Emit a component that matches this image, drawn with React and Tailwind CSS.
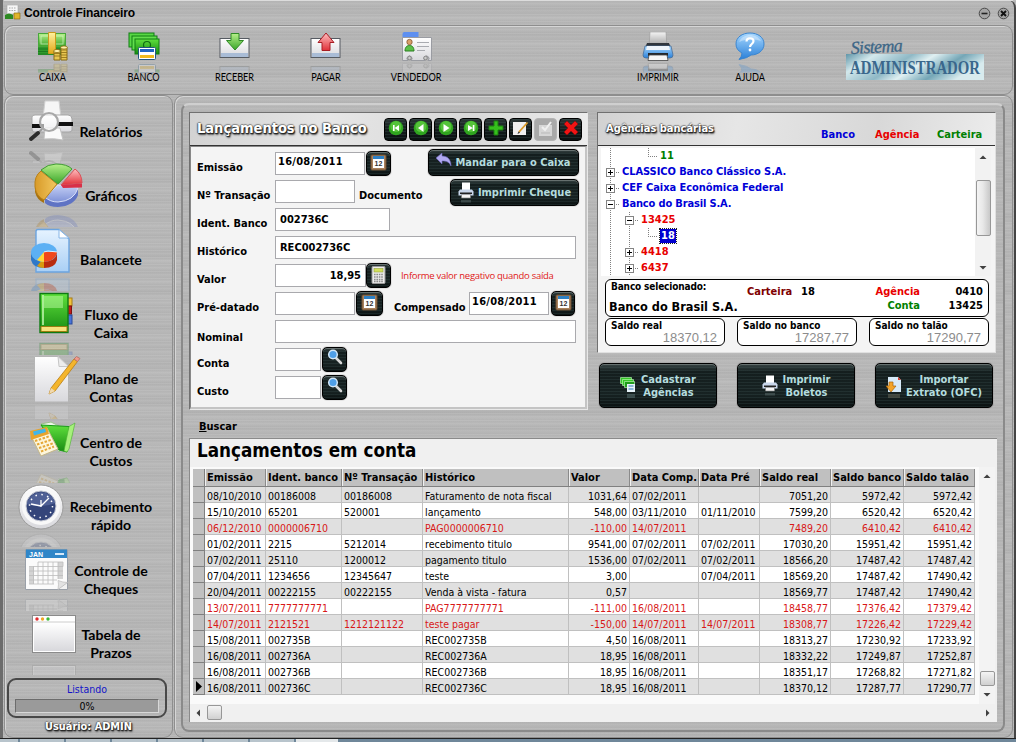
import React from "react";

const COLS = [
  ["Emissão", "w-[61px]", ""],
  ["Ident. banco", "w-[76px]", ""],
  ["Nº Transação", "w-[81px]", ""],
  ["Histórico", "w-[146px]", ""],
  ["Valor", "w-[61px]", "text-right"],
  ["Data Comp.", "w-[69px]", ""],
  ["Data Pré", "w-[61px]", ""],
  ["Saldo real", "w-[71px]", "text-right"],
  ["Saldo banco", "w-[73px]", "text-right"],
  ["Saldo talão", "w-[71px]", "text-right"],
];

const ROWS = [
  ["08/10/2010", "00186008", "00186008", "Faturamento de nota fiscal", "1031,64", "07/02/2011", "", "7051,20", "5972,42", "5972,42"],
  ["15/10/2010", "65201", "520001", "lançamento", "548,00", "03/11/2010", "01/11/2010", "7599,20", "6520,42", "6520,42"],
  ["06/12/2010", "0000006710", "", "PAG0000006710", "-110,00", "14/07/2011", "", "7489,20", "6410,42", "6410,42"],
  ["01/02/2011", "2215", "5212014", "recebimento titulo", "9541,00", "07/02/2011", "07/02/2011", "17030,20", "15951,42", "15951,42"],
  ["07/02/2011", "25110", "1200012", "pagamento titulo", "1536,00", "07/02/2011", "07/02/2011", "18566,20", "17487,42", "17487,42"],
  ["07/04/2011", "1234656", "12345647", "teste", "3,00", "", "07/04/2011", "18569,20", "17487,42", "17490,42"],
  ["20/04/2011", "00222155", "00222155", "Venda à vista - fatura", "0,57", "", "", "18569,77", "17487,42", "17490,42"],
  ["13/07/2011", "7777777771", "", "PAG7777777771", "-111,00", "16/08/2011", "", "18458,77", "17376,42", "17379,42"],
  ["14/07/2011", "2121521", "1212121122", "teste pagar", "-150,00", "14/07/2011", "14/07/2011", "18308,77", "17226,42", "17229,42"],
  ["15/08/2011", "002735B", "", "REC002735B", "4,50", "16/08/2011", "", "18313,27", "17230,92", "17233,92"],
  ["16/08/2011", "002736A", "", "REC002736A", "18,95", "16/08/2011", "", "18332,22", "17249,87", "17252,87"],
  ["16/08/2011", "002736B", "", "REC002736B", "18,95", "16/08/2011", "", "18351,17", "17268,82", "17271,82"],
  ["16/08/2011", "002736C", "", "REC002736C", "18,95", "16/08/2011", "", "18370,12", "17287,77", "17290,77"],
];

function Defs() {
  const g = (id, a, b, h) => (
    <linearGradient id={id} x1="0" y1="0" x2={h ? "1" : "0"} y2={h ? "0" : "1"}>
      <stop offset="0" stopColor={a} />
      <stop offset="1" stopColor={b} />
    </linearGradient>
  );
  return (
    <svg className="absolute h-0 w-0">
      <defs>
        {g("gGreen", "#b6f08a", "#3aa52a")}
        {g("gGreenD", "#5fe03c", "#178a12")}
        {g("gRed", "#ffc0c0", "#e03038")}
        {g("gGold", "#fff2a0", "#e0a818")}
        {g("gBlue", "#a8d8ff", "#2a80d8")}
        {g("gWhite", "#ffffff", "#d8d8dc")}
        {g("gGray", "#f4f4f4", "#9a9a9a")}
        {g("gDoc", "#e6f3ff", "#a9cff5")}
        {g("gPie", "#c5d0f5", "#7f92d8")}
        {g("gAmber", "#d89a28", "#f2c860", true)}
      </defs>
    </svg>
  );
}

/* ---------- toolbar glyphs (32 x 30) ---------- */
const IconCash = () => (
  <g>
    <rect x="1" y="1" width="28" height="22" fill="#2f9a2c" />
    <rect x="1.500" y="1.500" width="27" height="13" fill="url(#gGreen)" stroke="#48a83c" />
    <rect x="4" y="4" width="22" height="8" fill="none" stroke="#eaffdc" strokeOpacity=".6" />
    <path d="M1 17h28M1 19.500h28M1 22h28" stroke="#1c7a20" />
    <path d="M11.500.500h7v21h-7z" fill="url(#gGold)" stroke="#c99a1c" />
    <path d="M17 19h6v9h-6zM24 15h6v13h-6z" fill="#e8c650" stroke="#8a6c14" />
    <path d="M17 21.500h6M17 24h6M24 18h6M24 20.500h6M24 23h6M24 25.500h6" stroke="#8a6c14" strokeWidth=".8" />
    <ellipse cx="20" cy="19" rx="3.300" ry="1.600" fill="#fff0a8" stroke="#8a6c14" strokeWidth=".8" />
    <ellipse cx="27" cy="15.500" rx="3.300" ry="1.600" fill="#fff0a8" stroke="#8a6c14" strokeWidth=".8" />
  </g>
);
const IconBank = () => (
  <g>
    <rect x="1" y="1" width="25" height="14" fill="#58d845" stroke="#0f7d12" />
    <rect x="4" y="4" width="25" height="14" fill="#62de4c" stroke="#0f7d12" />
    <rect x="7" y="7" width="24" height="15" fill="url(#gGreenD)" stroke="#0f7d12" />
    <circle cx="19" cy="13" r="3.500" fill="none" stroke="#0e6b12" strokeWidth="1.200" />
    <rect x="10.500" y="15.500" width="17" height="12" rx="1" fill="#fff" stroke="#24577e" />
    <rect x="12" y="17" width="14" height="3" fill="#1e63c0" />
    <rect x="12" y="23" width="14" height="3" fill="#f0b91c" />
  </g>
);
const Tray = () => (
  <g>
    <rect x="1" y="6.500" width="29" height="19" fill="url(#gWhite)" stroke="#565b62" />
    <rect x="2" y="21" width="27" height="4" fill="#a9bcd6" />
  </g>
);
const IconIn = () => (
  <g>
    <Tray />
    <path d="M12 1.500h8v7h4.500L16 18 7.500 8.500H12z" fill="url(#gGreen)" stroke="#2f8a26" />
  </g>
);
const IconOut = () => (
  <g>
    <Tray />
    <path d="M12 18.500h8v-8h4L16 1 8 10.500h4z" fill="url(#gRed)" stroke="#a81c24" />
  </g>
);
const IconCard = () => (
  <g>
    <path d="M1.500 2a2 2 0 0 1 2-2h14v6h-16z" fill="#5d8ff0" />
    <path d="M1.500 5.500h29v23h-3.500a2.500 2.500 0 1 0-3 0h-14a2.500 2.500 0 1 0-3 0h-5.500z" fill="url(#gWhite)" stroke="#9a9ca2" />
    <circle cx="8.500" cy="10" r="2.700" fill="#d9a06a" stroke="#7a4a24" strokeWidth=".7" />
    <path d="M4 19c0-4 2-5.500 4.500-5.500S13 15 13 19z" fill="#5cc048" stroke="#2b7f20" />
    <path d="M16 10.500h12M16 14.500h12M16 18.500h8" stroke="#a9abb0" strokeWidth="1.200" />
    <circle cx="8.500" cy="26" r="1.800" fill="#ccc" stroke="#888" />
    <circle cx="24.500" cy="26" r="1.800" fill="#ccc" stroke="#888" />
  </g>
);
const IconPrinter = () => (
  <g>
    <path d="M8 0h16l1 15H7z" fill="url(#gGray)" stroke="#999" strokeWidth=".6" />
    <path d="M5 11h22l2 5H3z" fill="#30353c" />
    <path d="M3 14h26l2 9q0 3-3 3H4q-3 0-3-3z" fill="url(#gBlue)" stroke="#4a6d96" strokeWidth=".8" />
    <path d="M5 14h22l1 4H4z" fill="#eef4fa" />
    <path d="M6 21h20v3H6z" fill="#23272c" />
    <path d="M7 23h18l1 5.500H6z" fill="#f6f6f6" stroke="#444" strokeWidth=".8" />
  </g>
);
const IconHelp = () => (
  <g>
    <path d="M16 1c8 0 14 4.500 14 11s-6 11-13 11q-3 3-12 4.500 3-3 3-6.500Q2 18 2 12C2 5.500 8 1 16 1z" fill="url(#gBlue)" stroke="#3b86d0" />
    <path d="M5 10c2-5 7-7 11-7s9 2 11 6c-7-2-14-2-22 1z" fill="#fff" fillOpacity=".35" />
    <path d="M12.500 9.500c0-4.500 7-4 7-.5 0 3-3.500 3-3.500 6" fill="none" stroke="#fff" strokeWidth="2.200" />
    <circle cx="16" cy="18" r="1.400" fill="#fff" />
  </g>
);

function ToolButton({ id, label, w, children }) {
  return (
    <div className={`flex flex-col items-center pt-[6px] ${w}`}>
      <svg className="-mb-[2px] h-[42px] w-8 shrink-0" viewBox="0 0 32 42">
        <clipPath id={`clip-${id}`}>
          <rect x="0" y="31.500" width="32" height="9" />
        </clipPath>
        <g id={`ic-${id}`}>{children}</g>
        <g clipPath={`url(#clip-${id})`} opacity=".25">
          <use href={`#ic-${id}`} transform="translate(0 60) scale(1 -1)" />
        </g>
      </svg>
      <span className="relative scale-x-[0.87] font-['Lato',sans-serif] text-[10.5px] leading-[10px] text-black">{label}</span>
    </div>
  );
}

/* ---------- sidebar glyphs (70 x 64, x origin 14) ---------- */
const SReport = () => (
  <g>
    <path d="M31 1h14l2 17H29z" fill="#f6f6f6" stroke="#d0d0d0" />
    <path d="M18 17q0-2 3-2h33q4 0 4 4v11q0 2-3 2H20q-2 0-2-3z" fill="url(#gWhite)" stroke="#a6a6a6" />
    <path d="M18 24h12v4H18zM44 22h15v4H44z" fill="#111" />
    <path d="M31 28h15l3 12q-9-2-19-1z" fill="#fafafa" stroke="#c2c2c2" />
    <circle cx="35" cy="22" r="9" fill="#fff" fillOpacity=".6" stroke="#a8a8a8" strokeWidth="2.200" />
    <path d="M28 29l-4 4" stroke="#999" strokeWidth="2" />
    <path d="M24 33l-7 6" stroke="#2c2c2c" strokeWidth="4" strokeLinecap="round" />
  </g>
);
const SPie = () => (
  <g>
    <path d="M31 35v4q4 4 13 4 16-1 20-12v-6z" fill="#5f73c4" />
    <path d="M44 21L31 33Q36 38 44 38 60 37 64 24z" fill="url(#gPie)" stroke="#d8dff8" />
    <path d="M21 21v7q2 8 9 11v-4z" fill="#a8720e" />
    <path d="M43 20L27 7Q20 12 21 23q1 9 9 13z" fill="url(#gAmber)" stroke="#b88018" />
    <path d="M44 20L27 6Q34 0 42 0q11 0 16 5z" fill="url(#gGreen)" stroke="#3f9c33" />
    <path d="M47 21L61 5q7 5 7 14z" fill="url(#gRed)" stroke="#d85058" />
    <path d="M47 21l21-1.500v4l-19 .5z" fill="#d83048" />
  </g>
);
const SBalance = () => (
  <g>
    <path d="M24 1.500q-2 0-2 2V44h33V11L45 1.500z" fill="url(#gDoc)" stroke="#6ba4e0" strokeWidth="1.400" />
    <path d="M45 1.500V10h10z" fill="#fff" stroke="#86b5e6" />
    <path d="M17 25v7q2 8 13 8V30z" fill="#2f78c8" />
    <path d="M30 30l-7 8q3 2 7 2z" fill="#d89a10" />
    <path d="M30 30l13-5v7q-2 8-13 8z" fill="#b82c10" />
    <ellipse cx="30" cy="24.500" rx="13" ry="9.500" fill="#5cb0f4" />
    <path d="M30 24l-7 8q3 2 7 2z" fill="#ffd83a" />
    <path d="M30 24h13q-1 9-13 10z" fill="#f0481c" />
    <path d="M30 24l4-1 9 1" stroke="#fff" strokeWidth=".8" fill="none" />
  </g>
);
const SBook = () => (
  <g>
    <rect x="53" y="6" width="5" height="8" fill="#f0c23c" stroke="#a87c10" />
    <rect x="53" y="14" width="4.500" height="8" fill="#c41a1a" stroke="#7c1010" />
    <rect x="53" y="23" width="5" height="9" fill="#4a74d8" stroke="#26489a" />
    <rect x="26" y="1.500" width="28" height="39" fill="url(#gGreenD)" stroke="#0d7a12" strokeWidth="1.400" />
    <rect x="30" y="4" width="19" height="12" fill="#c8ffb0" fillOpacity=".45" />
    <path d="M29 3v30" stroke="#c8f8b4" strokeWidth="1.500" />
    <rect x="27" y="34.500" width="26" height="5" fill="#f8e27c" stroke="#9a7d10" />
  </g>
);
const SPaper = () => (
  <g>
    <path d="M20.500.500h24l10 9V46h-34z" fill="url(#gWhite)" stroke="#b5b5b5" />
    <path d="M44 .500l1 10h9.500z" fill="#ececec" stroke="#c6c6c6" />
    <path d="M35 38l2-6L60 3l3.500 2.500L41 35z" fill="#f4b52c" stroke="#b97d12" strokeWidth=".8" />
    <path d="M35 38l2-6 4 3z" fill="#f0d9b0" />
    <path d="M60 3l2.500-2.500 3.500 2L63.500 5.500z" fill="#f09a8c" stroke="#b56c60" strokeWidth=".8" />
  </g>
);
const SCost = () => (
  <g>
    <path d="M27 4l10-2 20 10 2 3-14 17z" fill="#eef5e8" stroke="#9bbf8a" />
    <path d="M27 5l28 1.500L53 32l-8-2z" fill="url(#gGreenD)" stroke="#189818" />
    <path d="M55 6.500l6-3.500-6 26-2 3-3-1z" fill="#a6f07c" stroke="#4cb030" strokeWidth=".6" />
    <path d="M16 14l17-6 11 21-17 7z" fill="#fdf6dc" stroke="#c4b688" />
    <path d="M16 11l17-4 2 7-18 6z" fill="#e9a42c" />
    <path d="M19 11.500l12-3 1 3.500-12 3.500z" fill="#42b6e8" />
    <path d="M21 21l15-5M23 24.500l15-5M25 28l15-5M27 31.500l13-5" stroke="#e5a838" strokeWidth="2" strokeDasharray="2.500 1.500" />
  </g>
);
const SClock = () => (
  <g>
    <circle cx="27" cy="23" r="22" fill="url(#gWhite)" stroke="#9b9b9b" />
    <circle cx="27" cy="22" r="19" fill="#f8f8f8" />
    <circle cx="27" cy="22" r="15" fill="#34457a" stroke="#c3c7d2" />
    <path d="M12.500 20a15 15 0 0 1 29-1q-14 6-29 1z" fill="#6a7cb0" fillOpacity=".5" />
    <circle cx="27" cy="22" r="11.500" fill="none" stroke="#fff" strokeWidth="1.500" strokeDasharray="1.500 4.520" />
    <path d="M27 22l-10-2M27 23v-7M27 22l8-8" stroke="#fff" strokeWidth="1.300" />
  </g>
);
const SCalendar = () => (
  <g>
    <path d="M11.500 1.500h42v33l-9 7h-33z" fill="#fbfbfb" stroke="#9aa0a8" />
    <path d="M44 41.500h9.500v-7" fill="#f2f2f2" stroke="#9aa0a8" />
    <rect x="12" y="1.500" width="41" height="8.500" fill="#2f86c8" />
    <text x="15" y="8.500" fontSize="7" fontWeight="700" fontFamily="Liberation Sans, sans-serif" fill="#fff">JAN</text>
    <path d="M41 6h9" stroke="#d5e9fa" strokeWidth="2" />
    <rect x="15" y="19" width="5" height="17" fill="#d4d4d4" />
    <rect x="44" y="14" width="5" height="17" fill="#d4d4d4" />
    <path d="M24 14h25v4.500H15M15 23h34M15 27.500h34M15 32h28M15 36h25M19.500 18v18M24 14v22M29 14v22M34 14v22M39 14v22M44 14v17" fill="none" stroke="#bcbcbc" strokeWidth=".8" />
    <path d="M44 41.500q1-6 0-9 5 2 9.500 2z" fill="#e2e2e2" stroke="#bbb" strokeWidth=".7" />
  </g>
);
const SWindow = () => (
  <g>
    <rect x="18.500" y="3.500" width="43" height="37" fill="#fff" stroke="#8b8b8b" />
    <rect x="20" y="11" width="40" height="28" fill="url(#gWhite)" />
    <path d="M19 10h42" stroke="#ccc" />
    <circle cx="23" cy="7" r="1.700" fill="#e0282c" />
    <circle cx="28.500" cy="7" r="1.700" fill="#f0a828" />
    <circle cx="34" cy="7" r="1.700" fill="#3bb838" />
  </g>
);

const MENU = [
  [["Relatórios"], SReport, 92],
  [["Gráficos"], SPie, 94],
  [["Balancete"], SBalance, 95],
  [["Fluxo de", "Caixa"], SBook, 92],
  [["Plano de", "Contas"], SPaper, 95],
  [["Centro de", "Custos"], SCost, 90],
  [["Recebimento", "rápido"], SClock, 95],
  [["Controle de", "Cheques"], SCalendar, 93],
  [["Tabela de", "Prazos"], SWindow, 94],
];

function MenuItem({ lines, Glyph, mirror, n }) {
  return (
    <div className="flex h-16 items-center">
      <svg className="h-16 w-[70px] shrink-0 overflow-visible" viewBox="0 0 70 64">
        <clipPath id={`mclip${n}`}>
          <rect x="0" y="49" width="70" height="14" />
        </clipPath>
        <g id={`menu${n}`}>
          <Glyph />
        </g>
        <g clipPath={`url(#mclip${n})`} opacity=".25">
          <use href={`#menu${n}`} transform={`translate(0 ${mirror}) scale(1 -1)`} />
        </g>
      </svg>
      <div className="relative -ml-[21px] w-24 text-center font-['Lato',sans-serif] text-[14.1px] leading-[18px] font-bold text-black">
        {lines.map((l) => (
          <div key={l}>{l}</div>
        ))}
      </div>
    </div>
  );
}

/* ---------- dark glossy buttons ---------- */
function Dark({ className = "", children }) {
  return (
    <div
      className={`flex shrink-0 items-center justify-center rounded-[5px] border border-black bg-[repeating-linear-gradient(180deg,rgba(90,120,120,0.16)_0px,rgba(90,120,120,0.16)_1px,transparent_1px,transparent_3px),linear-gradient(180deg,#3a4747_0%,#141e1e_18%,#172222_70%,#0b1212_100%)] font-bold text-[#b4dcde] shadow-[inset_0_1px_0_#66706f,0_0_1px_#333] ${className}`}
    >
      {children}
    </div>
  );
}
const MiniCal = () => (
  <svg className="-mt-[3px] h-[17px] w-[17px]" viewBox="0 0 17 17">
    <rect x="1" y="1" width="15" height="15" rx="1" fill="#a9825c" stroke="#6a4c30" />
    <rect x="3" y="2.500" width="11" height="11.500" fill="#fff" />
    <rect x="3" y="2" width="11" height="3" fill="#2e80c4" />
    <text x="4.500" y="12" fontSize="7" fontFamily="Liberation Sans, sans-serif" fill="#333">12</text>
  </svg>
);
const MiniCalc = () => (
  <svg className="-mt-[2px] h-[18px] w-[15px]" viewBox="0 0 15 18">
    <rect x="1" y=".5" width="13" height="17" rx="1" fill="#ececec" stroke="#999" />
    <rect x="3" y="2.500" width="9" height="3.500" fill="#d2e05c" stroke="#95a040" strokeWidth=".6" />
    <path d="M3 8.500h9M3 11h9M3 13.500h9M3 15.500h9" stroke="#8a8a8a" strokeWidth="1.400" strokeDasharray="1.600 .8" />
  </svg>
);
const MiniLens = () => (
  <svg className="-mt-[5px] h-[16px] w-[16px]" viewBox="0 0 16 16">
    <path d="M9 9l5 5" stroke="#d8d8d8" strokeWidth="2.600" strokeLinecap="round" />
    <circle cx="6" cy="5.500" r="4.300" fill="#4f9fe8" stroke="#d3e7f8" strokeWidth="1.500" />
  </svg>
);
const MiniPrinter = () => (
  <svg className="h-[21px] w-[16px] shrink-0 overflow-visible" viewBox="0 0 16 21">
    <path d="M4 .500h8V8H4z" fill="#fff" />
    <path d="M2 7.500h12l1.500 2v4H.5v-4z" fill="#c8d6ea" />
    <path d="M2 10.500h12v1.500H2z" fill="#222" />
    <path d="M3.500 12.500h9V16h-9z" fill="#f4f4f4" stroke="#777" strokeWidth=".6" />
    <path d="M3 18h10v2.500H3z" fill="#5c6b6c" opacity=".5" />
  </svg>
);
const NavDisc = ({ d }) => (
  <svg className="-mt-[3px] h-[16px] w-[16px]" viewBox="0 0 16 16">
    <circle cx="8" cy="8" r="7.300" fill="#2fa51f" />
    <circle cx="8" cy="6.500" r="5.500" fill="#74dc50" fillOpacity=".55" />
    <path d={d} fill="#fff" />
  </svg>
);
const NavButton = ({ children, dim }) => (
  <div
    className={
      dim
        ? "flex h-[23px] w-[23px] items-center justify-center rounded-[4px] border border-[#b4b4b4] bg-[#a9a9a9]"
        : "flex h-[23px] w-[23px] items-center justify-center rounded-[4px] border border-black bg-[repeating-linear-gradient(180deg,rgba(90,120,120,0.2)_0px,rgba(90,120,120,0.2)_1px,transparent_1px,transparent_3px),linear-gradient(180deg,#2b3636_0%,#101818_60%,#0b1212_100%)]"
    }
  >
    {children}
  </div>
);

function Field({ label, down = "pt-[7px]", children }) {
  return (
    <div className="mb-[5px] flex h-[23px] items-center">
      <span className={`w-[78px] shrink-0 whitespace-nowrap font-bold ${down}`}>{label}</span>
      {children}
    </div>
  );
}
const Input = ({ className = "leading-[21px]", children }) => (
  <div className={`h-[23px] shrink-0 border border-[#a9a9ad] bg-white font-bold ${className}`}>{children}</div>
);

/* ---------- tree ---------- */
function Cell({ kind }) {
  return (
    <svg className="h-4 w-[19px] shrink-0" viewBox="0 0 19 16" shapeRendering="crispEdges">
      <g stroke="#808080" strokeDasharray="1 1" fill="none">
        {kind === "line" && <path d="M9.500 0v16" />}
        {kind === "elbow" && <path d="M9.500 0v8.500h9.500" />}
        {(kind === "plus" || kind === "minus") && <path d="M9.500 0v16M13 8.500h6" />}
      </g>
      {(kind === "plus" || kind === "minus") && (
        <g>
          <rect x="5.500" y="4.500" width="8" height="8" fill="#fff" stroke="#848484" />
          <path d={kind === "plus" ? "M7 8.500h5M9.500 6v5" : "M7 8.500h5"} stroke="#000" />
        </g>
      )}
    </svg>
  );
}
const TREE = [
  [["line", "none", "elbow"], "11", "text-[#008000]"],
  [["plus"], "CLASSICO Banco Clássico S.A.", "text-[#0000d8] tracking-[-0.07px]"],
  [["plus"], "CEF Caixa Econômica Federal", "text-[#0000d8] tracking-[-0.05px]"],
  [["minus"], "Banco do Brasil S.A.", "text-[#0000d8] tracking-[-0.15px]"],
  [["line", "minus"], "13425", "text-[#e80000]"],
  [["line", "line", "elbow"], "18", "bg-[#0000d0] px-px text-white outline outline-dotted outline-[#222]"],
  [["line", "plus"], "4418", "text-[#e80000]"],
  [["line", "plus"], "6437", "text-[#e80000]"],
];

const Arrow = ({ d, className = "" }) => (
  <svg className={`h-[8px] w-[8px] ${className}`} viewBox="0 0 8 8">
    <path d={d} fill="#404040" />
  </svg>
);
const UP = "M.5 6L4 2.500 7.500 6z";
const DOWN = "M.5 2h7L4 5.500z";

const METAL =
  "bg-[repeating-linear-gradient(180deg,rgba(255,255,255,0.10)_0px,rgba(0,0,0,0.03)_2px,rgba(255,255,255,0.08)_3px,rgba(0,0,0,0.02)_7px),repeating-linear-gradient(180deg,#b8b8b8_0px,#b2b2b2_11px,#b9b9b9_17px,#b4b4b4_29px,#b8b8b8_37px)]";
const PANEL_HEAD =
  "flex h-[33px] shrink-0 border-b border-[#333] bg-[linear-gradient(100deg,#d2d2d2_0%,#e6e6e6_35%,#d8d8d8_70%,#ececec_100%)]";
const OUTLINED =
  "text-white [text-shadow:1px_1px_1px_#222,0_1px_1px_#333,1px_2px_2px_#555,-1px_0_1px_#777,0_-1px_1px_#888]";

function FormPanel() {
  return (
    <div className="flex h-[298px] w-[399px] flex-col border border-[#707070] border-r-[#e8e8e8] border-b-[#e8e8e8] bg-[#f4f4f4]">
      <div className={`${PANEL_HEAD} items-center pl-[7px]`}>
        <span className={`-mt-[3px] w-[187px] text-[14.5px] leading-4 font-bold whitespace-nowrap ${OUTLINED}`}>Lançamentos no Banco</span>
        <div className="flex gap-[2px]">
          <NavButton><NavDisc d="M5 5h1.600v6H5zM11 5v6L6.600 8z" /></NavButton>
          <NavButton><NavDisc d="M10.500 4v8L5 8z" /></NavButton>
          <NavButton><NavDisc d="M5.500 4v8L11.500 8z" /></NavButton>
          <NavButton><NavDisc d="M9.800 5h1.600v6H9.800zM5 5v6l4.800-3z" /></NavButton>
          <NavButton>
            <svg className="-mt-[3px] h-4 w-4" viewBox="0 0 16 16"><path d="M6 1h4v5h5v4h-5v5H6v-5H1V6h5z" fill="#35c01c" stroke="#1c7f10" /></svg>
          </NavButton>
          <NavButton>
            <svg className="h-[18px] w-[19px]" viewBox="0 0 19 18"><path d="M2 2h13v13H2z" fill="#efefef" /><path d="M8 12L16.500 2.500" stroke="#d99a28" strokeWidth="1.800" /><path d="M6.500 14l1-2.500 1.600 1.300z" fill="#333" /></svg>
          </NavButton>
          <NavButton dim>
            <svg className="h-[17px] w-[17px]" viewBox="0 0 17 17"><path d="M2 4h13v11H2z" fill="#d6d6d6" /><path d="M5 6l3 3 6-8" stroke="#efefef" strokeWidth="2" fill="none" /><path d="M4 12h9" stroke="#b9b9b9" /></svg>
          </NavButton>
          <NavButton>
            <svg className="-mt-[3px] h-4 w-4" viewBox="0 0 16 16"><path d="M4 1l4 4 4-4 3 3-4 4 4 4-3 3-4-4-4 4-3-3 4-4-4-4z" fill="#f01414" stroke="#8c0808" strokeWidth=".6" /></svg>
          </NavButton>
        </div>
      </div>
      <div className="flex-1 border-t border-l border-[#888] border-r-2 border-b-2 border-r-[#c4c4c4] border-b-[#c4c4c4] pt-[5px] pl-[6px]">
        <Field label="Emissão">
          <Input className="w-[90px] pl-[2px] leading-[18px] tracking-[0.25px]">16/08/2011</Input>
          <Dark className="ml-[1px] h-[25px] w-[25px]"><MiniCal /></Dark>
          <Dark className="-mt-[3px] ml-[37px] h-[27px] w-[151px] gap-[3px]">
            <svg className="-mt-1 h-[14px] w-[16px]" viewBox="0 0 16 14"><path d="M0 5l6-5v3c6 0 9 4 9 10-2-4-4-5-9-5v3z" fill="#b0a8f0" stroke="#6c64b8" strokeWidth=".6" /></svg>
            <span className="whitespace-nowrap">Mandar para o Caixa</span>
          </Dark>
        </Field>
        <Field label="Nº Transação">
          <Input className="w-[80px]" />
          <span className="w-[95px] pt-[7px] pl-1 font-bold">Documento</span>
          <Dark className="mt-[2px] h-[27px] w-[129px] gap-[4px]">
            <MiniPrinter />
            <span className="whitespace-nowrap">Imprimir Cheque</span>
          </Dark>
        </Field>
        <Field label="Ident. Banco"><Input className="w-[115px] pl-1 leading-[22px]">002736C</Input></Field>
        <Field label="Histórico"><Input className="w-[301px] pl-1 leading-[22px]">REC002736C</Input></Field>
        <Field label="Valor">
          <Input className="w-[91px] pr-1 text-right leading-[22px]">18,95</Input>
          <Dark className="h-[25px] w-[25px]"><MiniCalc /></Dark>
          <span className="ml-[10px] font-['Open_Sans','DejaVu_Sans_Condensed',sans-serif] text-[9.5px] tracking-[-0.29px] whitespace-nowrap text-[#e01818]">Informe valor negativo quando saída</span>
        </Field>
        <Field label="Pré-datado">
          <Input className="w-[80px]" />
          <Dark className="ml-[1px] h-[25px] w-[27px]"><MiniCal /></Dark>
          <span className="ml-[11px] w-[75px] pt-[7px] font-bold whitespace-nowrap">Compensado</span>
          <Input className="w-[80px] pl-[2px] leading-[18px] tracking-[0.25px]">16/08/2011</Input>
          <Dark className="ml-[2px] h-[25px] w-[24px]"><MiniCal /></Dark>
        </Field>
        <Field label="Nominal" down="pt-[11px]"><Input className="w-[301px]" /></Field>
        <Field label="Conta"><Input className="w-[46px]" /><Dark className="ml-[1px] h-[25px] w-[25px]"><MiniLens /></Dark></Field>
        <Field label="Custo"><Input className="w-[46px]" /><Dark className="ml-[1px] h-[25px] w-[25px]"><MiniLens /></Dark></Field>
      </div>
    </div>
  );
}

function Balance({ label, value }) {
  return (
    <div className="h-7 w-[120px] rounded-[6px] border border-black bg-white px-[5px] pt-[2px]">
      <div className="text-[10px] leading-[10px] font-bold whitespace-nowrap">{label}</div>
      <div className="pr-[2px] text-right font-['Liberation_Sans',sans-serif] text-[13px] leading-[14px] text-[#8c8c8c]">{value}</div>
    </div>
  );
}

function BankPanel() {
  return (
    <div className="h-[241px] w-[399px] border border-[#707070] border-r-[#e0e0e0] border-b-[#e0e0e0] bg-[#f4f4f4]">
      <div className={`${PANEL_HEAD} pl-2 font-bold`}>
        <span className={`w-[215px] pt-[9px] text-[11px] leading-[14px] whitespace-nowrap ${OUTLINED}`}>Agências bancárias</span>
        <span className="w-[54px] pt-[15px] text-[#0000d8]">Banco</span>
        <span className="w-[62px] pt-[15px] text-[#e80000]">Agência</span>
        <span className="pt-[15px] text-[#008000]">Carteira</span>
      </div>
      <div className="mt-[2px] flex pl-[3px]">
        <div className="h-32 w-[374px] bg-white">
          {TREE.map(([cells, text, color]) => (
            <div key={text} className="flex h-4 items-center">
              {cells.map((c, i) => <Cell key={i} kind={c} />)}
              <span className={`ml-[2px] leading-[14px] font-bold whitespace-nowrap ${color}`}>{text}</span>
            </div>
          ))}
        </div>
        <div className="flex w-4 flex-col items-center bg-[#f2f2f2]">
          <Arrow d={UP} className="mt-[5px]" />
          <div className="mt-[19px] h-[56px] w-[15px] rounded-[2px] border border-[#979797] bg-[linear-gradient(90deg,#f4f4f4_0%,#e8e8e8_45%,#c8c8c8_100%)]" />
          <Arrow d={DOWN} className="mt-auto mb-1" />
        </div>
      </div>
      <div className="mt-[3px] ml-[7px] flex h-[38px] w-[384px] rounded-[6px] border border-black bg-white font-bold whitespace-nowrap">
        <div className="w-[137px] pl-[3px]">
          <div className="pt-[1px] pl-[2px] text-[10px] leading-[11px] tracking-[-0.15px]">Banco selecionado:</div>
          <div className="pt-[7px] text-[12.6px] leading-[16px]">Banco do Brasil S.A.</div>
        </div>
        <div className="w-[54px] pt-[5px] pl-1 leading-[14px] text-[#800000]">Carteira</div>
        <div className="w-[60px] pt-[5px] pl-1 leading-[14px]">18</div>
        <div className="w-[63px] pt-[5px] text-right leading-[14px]">
          <div className="text-[#e80000]">Agência</div>
          <div className="text-[#008000]">Conta</div>
        </div>
        <div className="w-[63px] pt-[5px] text-right leading-[14px]">
          <div>0410</div>
          <div>13425</div>
        </div>
      </div>
      <div className="mt-[1px] ml-[7px] flex gap-3">
        <Balance label="Saldo real" value="18370,12" />
        <Balance label="Saldo no banco" value="17287,77" />
        <Balance label="Saldo no talão" value="17290,77" />
      </div>
    </div>
  );
}

function Ledger() {
  return (
    <div className="flex h-[284px] w-[808px] flex-col border-t border-l border-[#8a8a8a] bg-[#f0f0f0]">
      <div className="h-[28px] pl-[7px] text-[18.7px] leading-[23px] font-bold">Lançamentos em conta</div>
      <div className="flex h-[237px]">
        <div className="w-[789px] bg-[#fafafa] pt-[2px] pl-[3px]">
          <div className="flex h-[18px] w-[782px] border-b border-[#808080] bg-[#c0c0c0] font-bold">
            <div className="w-3 shrink-0 border-r border-[#808080]" />
            {COLS.map(([name, w]) => (
              <div key={name} className={`${w} shrink-0 border-r border-l border-r-[#8a8a8a] border-l-[#f0f0f0] pl-px leading-[18px] whitespace-nowrap`}>{name}</div>
            ))}
          </div>
          {ROWS.map((row, r) => (
            <div key={r} className={`flex h-4 w-[782px] ${r % 2 ? "bg-white" : "bg-[#e0e0e0]"} ${row[4][0] === "-" ? "text-[#d81818]" : "text-black"}`}>
              <div className="flex w-3 shrink-0 items-center border-r border-b border-r-[#808080] border-b-[#808080] bg-[#c0c0c0]">
                {r === 12 && <svg className="ml-[3px] h-[11px] w-[6px]" viewBox="0 0 6 11"><path d="M0 0l6 5.500L0 11z" /></svg>}
              </div>
              {row.map((v, c) => (
                <div key={c} className={`${COLS[c][1]} ${COLS[c][2]} shrink-0 border-r border-b border-[#c0c0c0] px-[2px] text-[10.5px] leading-[18px] whitespace-nowrap`}>{v}</div>
              ))}
            </div>
          ))}
        </div>
        <div className="flex w-4 flex-col items-center bg-[#f3f3f3]">
          <Arrow d={UP} className="mt-[5px]" />
          <div className="mt-auto h-[15px] w-[15px] rounded-[2px] border border-[#979797] bg-[linear-gradient(180deg,#f4f4f4,#d0d0d0)]" />
          <Arrow d={DOWN} className="mt-[5px] mb-[5px]" />
        </div>
      </div>
      <div className="flex h-[17px] items-center pl-[4px]">
        <Arrow d="M6 .5v7L2.500 4z" />
        <div className="ml-[5px] h-[15px] w-[15px] rounded-[2px] border border-[#979797] bg-[linear-gradient(180deg,#f4f4f4,#d0d0d0)]" />
        <Arrow d="M2 .5v7L5.500 4z" className="mr-[5px] ml-auto" />
      </div>
    </div>
  );
}

export default function App() {
  return (
    <div className={`flex h-[742px] w-[1016px] flex-col overflow-hidden font-['DejaVu_Sans_Condensed','DejaVu_Sans',sans-serif] text-[11px] leading-[13px] text-black ${METAL}`}>
      <Defs />
      <div className="flex h-[738px] flex-col rounded-tr-lg border-r-2 border-l-[3px] border-r-[#454545] border-l-[#6c6c6c] pr-[1px] pl-[1px]">
        <div className="flex h-[25px] shrink-0 items-center border-t border-[#dcdcdc]">
          <svg className="ml-[1px] h-4 w-4" viewBox="0 0 16 16">
            <path d="M2 0h11v9H2z" fill="#f6f6f6" stroke="#aaa" strokeWidth=".6" />
            <path d="M4 3h7M4 5.500h7" stroke="#aaa" strokeDasharray="1.500 1" />
            <path d="M0 10q4-3 8 0v4H0z" fill="#2d8a22" />
            <path d="M9 8h6v6H9z" fill="#e0b52c" stroke="#946f10" strokeWidth=".7" />
          </svg>
          <span className="ml-[3px] font-['Liberation_Sans',sans-serif] text-[12px] tracking-[-0.12px] font-bold">Controle Financeiro</span>
          <svg className="mr-[3px] ml-auto h-[13px] w-[32px]" viewBox="0 0 32 13">
            <circle cx="6.500" cy="6.500" r="5.300" fill="#a4a4a4" stroke="#4a4a4a" />
            <path d="M3.500 6.500h6" stroke="#222" strokeWidth="1.600" />
            <circle cx="25.500" cy="6.500" r="5.300" fill="#a4a4a4" stroke="#4a4a4a" />
            <path d="M23 4l5 5M28 4l-5 5" stroke="#111" strokeWidth="1.900" />
          </svg>
        </div>

        <div className={`flex h-[70px] shrink-0 rounded-[9px] border border-[#8e8e8e] pl-[2px] shadow-[inset_1px_1px_0_#d6d6d6] ${METAL}`}>
          <ToolButton id="cash" label="CAIXA" w="w-[91px]"><IconCash /></ToolButton>
          <ToolButton id="bank" label="BANCO" w="w-[91px]"><IconBank /></ToolButton>
          <ToolButton id="in" label="RECEBER" w="w-[91px]"><IconIn /></ToolButton>
          <ToolButton id="out" label="PAGAR" w="w-[91px]"><IconOut /></ToolButton>
          <ToolButton id="card" label="VENDEDOR" w="w-[91px]"><IconCard /></ToolButton>
          <div className="w-[150px]" />
          <ToolButton id="print" label="IMPRIMIR" w="w-[92px]"><IconPrinter /></ToolButton>
          <ToolButton id="help" label="AJUDA" w="w-[92px]"><IconHelp /></ToolButton>
          <svg className="mt-2 ml-[49px] h-[48px] w-[141px] overflow-visible" viewBox="0 0 141 48">
            <defs>
              <linearGradient id="logo" x1="0" y1="0" x2="1" y2=".3">
                <stop offset="0" stopColor="#5f95a8" />
                <stop offset=".2" stopColor="#d3e8ec" />
                <stop offset=".45" stopColor="#8fb9c6" />
                <stop offset=".6" stopColor="#e0f0f2" />
                <stop offset=".8" stopColor="#74a6b6" />
                <stop offset="1" stopColor="#d8ebee" />
              </linearGradient>
            </defs>
            <rect x="1" y="20" width="138" height="26" fill="url(#logo)" />
            <text x="6" y="20" fontFamily="Liberation Serif, serif" fontStyle="italic" fontSize="18" textLength="52" fill="#3d6787" stroke="#3d6787" strokeWidth=".3" transform="rotate(-3 6 20)">Sistema</text>
            <text x="5" y="40" fontFamily="Liberation Serif, serif" fontWeight="700" fontSize="18" textLength="130" lengthAdjust="spacingAndGlyphs" fill="#3a678c">ADMINISTRADOR</text>
          </svg>
        </div>

        <div className="flex h-[643px] gap-[1px]">
          <div className={`flex w-[169px] flex-col rounded-[9px] border border-[#8e8e8e] pt-1 shadow-[inset_1px_1px_0_#d6d6d6] ${METAL}`}>
            <div className="pl-[9px]">
              {MENU.map(([lines, Glyph, mirror], n) => (
                <MenuItem key={n} n={n} lines={lines} Glyph={Glyph} mirror={mirror} />
              ))}
            </div>
            <div className="mt-[2px] ml-[2px] flex h-10 w-40 flex-col items-center rounded-[9px] border-2 border-[#484848]">
              <span className="pt-[3px] text-[10.5px] leading-[13px] text-[#1414c8]">Listando</span>
              <div className="mt-[3px] h-[14px] w-36 border border-[#6c6c6c] border-r-[#d8d8d8] border-b-[#d8d8d8] bg-[#9a9a9a] text-center text-[10.5px] leading-[13px]">0%</div>
            </div>
            <div className={`mt-[2px] text-center text-[10.9px] leading-[14px] font-bold ${OUTLINED}`}>Usuário: ADMIN</div>
          </div>

          <div className={`w-[839px] rounded-[9px] border border-[#8e8e8e] pt-[7px] pl-[6px] shadow-[inset_1px_1px_0_#d6d6d6] ${METAL}`}>
            <div className={`h-[629px] w-[824px] rounded-[8px] border-2 border-[#8a8a8a] border-t-[#cfcfcf] pt-[7px] pl-[6px] ${METAL}`}>
              <div className="flex gap-[9px]">
                <FormPanel />
                <div>
                  <BankPanel />
                  <div className="mt-[10px] ml-[2px] flex gap-[20px] text-center text-[11px]">
                    <Dark className="h-[45px] w-[118px] gap-[5px]">
                      <svg className="mt-1 h-[24px] w-[16px]" viewBox="0 0 16 24">
                        <path d="M.5 1.500h11v6H.5z" fill="#35c828" stroke="#c8ffc0" strokeWidth=".6" />
                        <path d="M2.500 3.500h11v6h-11z" fill="#35c828" stroke="#c8ffc0" strokeWidth=".6" />
                        <path d="M4.500 5.500h10v6h-10z" fill="#1f9c1c" stroke="#c8ffc0" strokeWidth=".6" />
                        <path d="M7 8h8v8H7z" fill="#e8f4fa" />
                        <path d="M8.500 10h5M8.500 13h5" stroke="#2a78b8" />
                        <path d="M7 18h8v4H7z" fill="#5c7474" opacity=".5" />
                      </svg>
                      <span>Cadastrar<br />Agências</span>
                    </Dark>
                    <Dark className="h-[45px] w-[118px] gap-[5px]">
                      <MiniPrinter />
                      <span>Imprimir<br />Boletos</span>
                    </Dark>
                    <Dark className="h-[45px] w-[118px] gap-[4px]">
                      <svg className="mt-1 h-[24px] w-[16px] shrink-0" viewBox="0 0 16 24">
                        <path d="M2 1h10l3 3v12H2z" fill="#d8ebfa" />
                        <path d="M12 1v3h3z" fill="#d84030" />
                        <path d="M3 6h4v4h3l-5 6-5-6h3z" fill="#f4a52c" stroke="#a8660c" strokeWidth=".7" />
                        <path d="M2 18h12v4H2z" fill="#6c6c5c" opacity=".5" />
                      </svg>
                      <span className="whitespace-nowrap">Importar<br />Extrato (OFC)</span>
                    </Dark>
                  </div>
                </div>
              </div>
              <div className="h-7 pt-[10px] pl-[10px] font-bold"><span className="underline">B</span>uscar</div>
              <Ledger />
            </div>
          </div>
        </div>
      </div>
      <div className="flex h-1 shrink-0 gap-[2px] border-t border-[#222] bg-[#6f879a]">
        <div className="w-[18px] bg-[#b8c4cc]" />
        <div className="w-[44px] bg-[#b8c4cc]" />
        <div className="w-[44px] bg-[#b8c4cc]" />
        <div className="w-[44px] bg-[#b8c4cc]" />
        <div className="w-[44px] bg-[#b8c4cc]" />
        <div className="w-[44px] bg-[#b8c4cc]" />
        <div className="w-[44px] bg-[#b8c4cc]" />
        <div className="w-[42px] bg-[#e4e8ea]" />
      </div>
    </div>
  );
}
